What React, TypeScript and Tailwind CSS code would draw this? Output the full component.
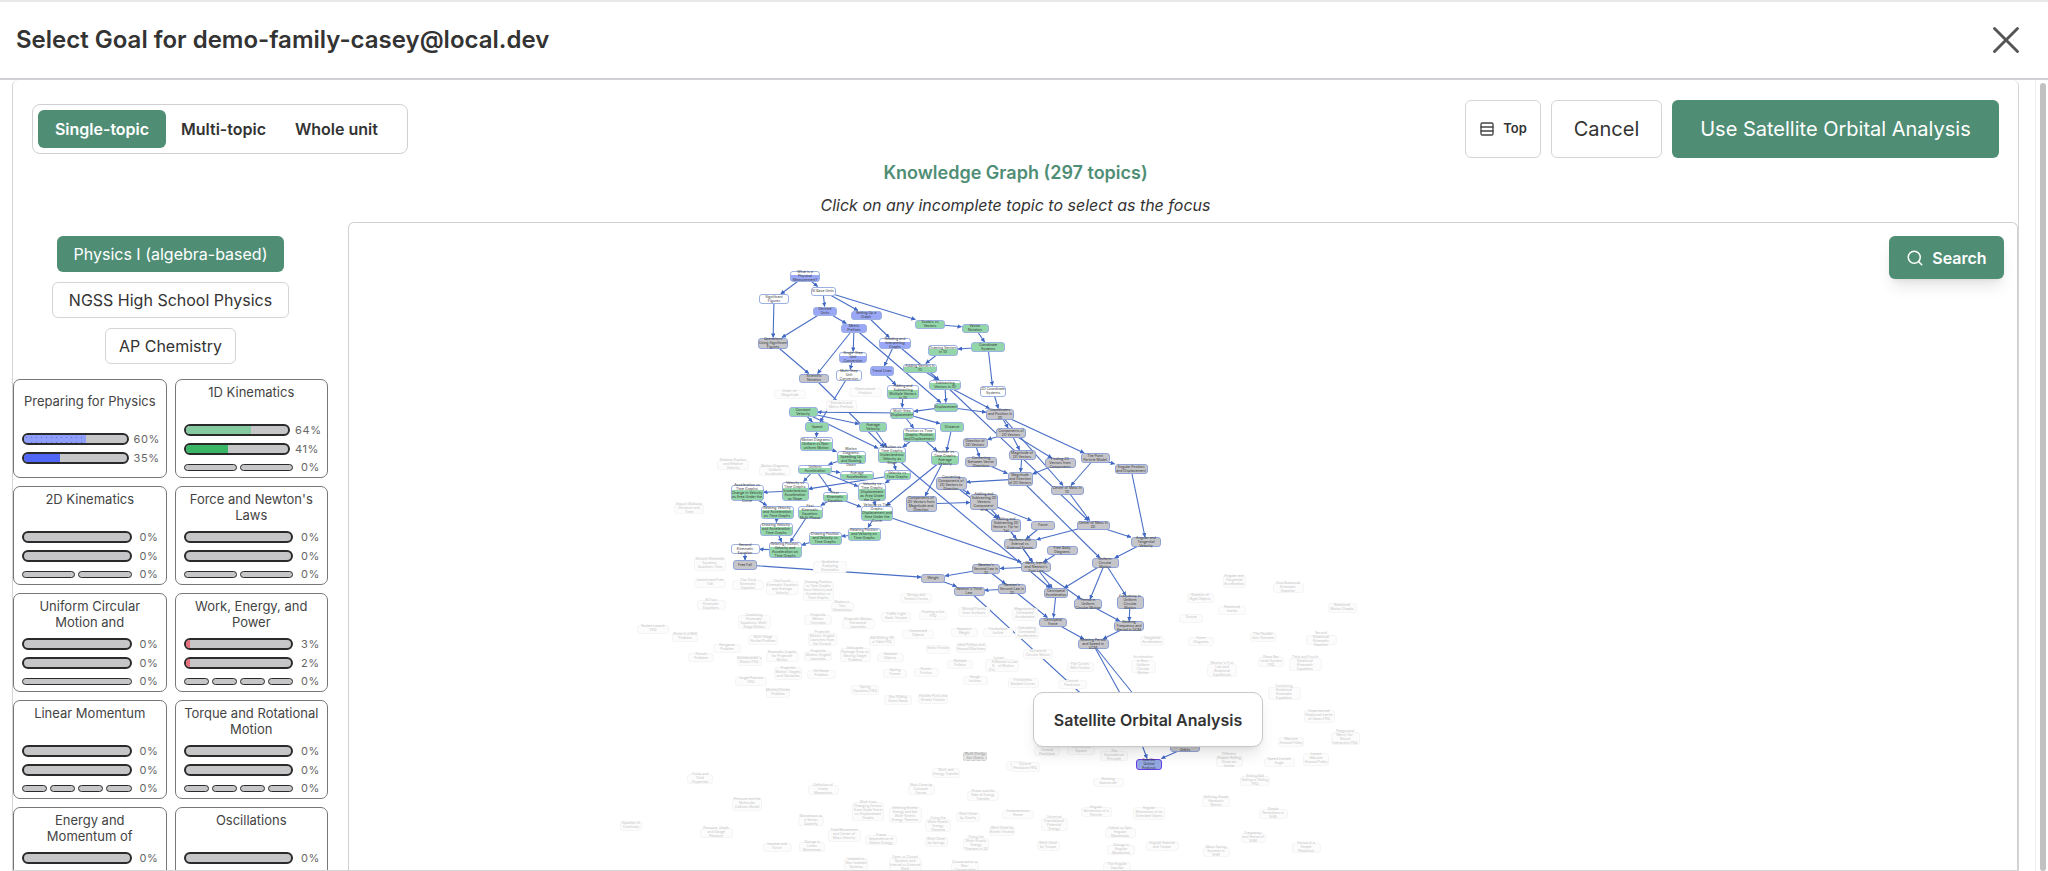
import React from 'react';
import { X, Rows3, Search } from 'lucide-react';

type Kind = 'b' | 'bh' | 'g' | 'gh' | 'w' | 's' | 'sel';
type GraphNode = [string, number, number, number, number, string, Kind];

// page coordinates of the lit part of the graph: id, centre x, centre y, w, h, label, kind
const nodes: GraphNode[] = [
  ['what', 804, 276, 30, 11, 'What is a Physical Measurement?', 'bh'],
  ['si', 822, 291, 25, 9, 'SI Base Units', 'w'],
  ['sig', 773, 299, 30, 10, 'Significant Figures', 'w'],
  ['derived', 824, 311, 24, 9, 'Derived Units', 'b'],
  ['setup', 865, 315, 31, 9, 'Setting Up a Graph', 'b'],
  ['scalars', 929, 324, 30, 9, 'Scalars vs Vectors', 'g'],
  ['vecnot', 974, 328, 27, 9, 'Vector Notation', 'g'],
  ['metric', 853, 328, 26, 9, 'Metric Prefixes', 'b'],
  ['ops', 772, 343, 30, 11, 'Operations Using Significant Figures', 's'],
  ['reading', 894, 343, 32, 11, 'Reading and Interpreting Graphs', 'bh'],
  ['coord', 987, 347, 34, 10, 'Coordinate Systems', 'g'],
  ['draw1d', 942, 350, 30, 11, 'Drawing Vectors in 1D', 'gh'],
  ['single', 852, 357, 28, 11, 'Single-Step Unit Conversion', 'bh'],
  ['add1d', 919, 368, 34, 9, 'Adding Vectors in 1D', 'gh'],
  ['trend', 881, 371, 24, 10, 'Trend Lines', 'b'],
  ['multi', 848, 375, 26, 11, 'Multi-Step Unit Conversion', 'w'],
  ['sci', 813, 378, 30, 9, 'Scientific Notation', 's'],
  ['sub1d', 944, 385, 32, 10, 'Subtracting Vectors in 1D', 'gh'],
  ['addm', 902, 392, 32, 14, 'Adding and Subtracting Multiple Vectors in 1D', 'gh'],
  ['sys2d', 992, 391, 26, 11, '2D Coordinate Systems', 'w'],
  ['disp', 945, 407, 24, 9, 'Displacement', 'g'],
  ['constv', 802, 412, 29, 10, 'Constant Velocity', 'g'],
  ['mdisp', 901, 413, 24, 11, 'Multi-Step Displacement', 'gh'],
  ['pos2d', 999, 414, 28, 11, 'Coordinates and Position in 2D', 's'],
  ['speed', 816, 427, 24, 10, 'Speed', 'g'],
  ['avgv', 872, 427, 28, 10, 'Average Velocity', 'g'],
  ['dist', 951, 427, 24, 10, 'Distance', 'g'],
  ['ptg', 918, 435, 33, 14, 'Position vs Time Graphs: Position and Displacement', 'gh'],
  ['md1', 815, 444, 33, 14, 'Motion Diagrams: Uniform vs Non-uniform Motion', 'gh'],
  ['md2', 850, 457, 29, 13, 'Motion Diagrams: Speeding Up and Slowing Down', 'gh'],
  ['ptv', 891, 455, 28, 16, 'Position vs Time Graphs: Instantaneous Velocity as Slope', 'gh'],
  ['pta', 944, 458, 28, 14, 'Position vs Time Graphs: Average Velocity', 'gh'],
  ['unia', 814, 469, 34, 9, 'Uniform Acceleration', 'gh'],
  ['avga', 856, 475, 34, 9, 'Average Acceleration', 'gh'],
  ['vtg', 896, 475, 27, 10, 'Velocity vs Time Graphs', 'gh'],
  ['vta', 794, 491, 27, 19, 'Velocity vs Time Graphs: Instantaneous Acceleration as Slope', 'gh'],
  ['vtd', 871, 492, 28, 18, 'Velocity vs Time Graphs: Displacement as Area Under the Curve', 'gh'],
  ['atg', 746, 493, 33, 16, 'Acceleration vs Time Graphs: Change in Velocity as Area Under the Curve', 'gh'],
  ['k1', 834, 497, 25, 10, 'First Kinematic Equation', 'gh'],
  ['rva', 776, 512, 33, 13, 'Relating Velocity and Acceleration on Time Graphs', 'gh'],
  ['k1m', 809, 512, 25, 13, 'First Kinematic Equation: Multi-Phase', 'gh'],
  ['vtarea', 876, 513, 32, 15, 'Velocity vs Time Graphs: Displacement and Area Under the Curve', 'gh'],
  ['dva', 775, 529, 33, 13, 'Drawing Velocity and Acceleration Time Graphs', 'gh'],
  ['rpv', 863, 534, 33, 13, 'Relating Position and Velocity on Time Graphs', 'gh'],
  ['dpv', 824, 538, 33, 13, 'Drawing Position and Velocity vs Time Graphs', 'gh'],
  ['rpva', 784, 550, 33, 16, 'Relating Position, Velocity and Acceleration on Time Graphs', 'gh'],
  ['k2', 744, 549, 29, 10, 'Second Kinematic Equation', 'w'],
  ['fall', 744, 565, 24, 10, 'Free Fall', 's'],
  ['weight', 932, 578, 24, 9, 'Weight', 's'],
  ['cm2d', 920, 504, 31, 16, 'Components of 2D Vectors from Magnitude and Direction', 's'],
  ['conv', 950, 483, 31, 13, 'Converting Components of 2D Vectors to Direction', 's'],
  ['comp', 1010, 433, 30, 10, 'Components of 2D Vectors', 's'],
  ['dir', 974, 443, 25, 10, 'Direction of 2D Vectors', 's'],
  ['convd', 980, 462, 32, 10, 'Converting Between Vector Directions', 's'],
  ['mag', 1021, 455, 27, 10, 'Magnitude of 2D Vectors', 's'],
  ['find', 1059, 463, 31, 10, 'Finding 2D Vectors from Components', 's'],
  ['point', 1094, 458, 29, 10, 'The Point Particle Model', 's'],
  ['angpos', 1130, 469, 33, 10, 'Angular Position and Displacement', 's'],
  ['magdir', 1019, 479, 25, 14, 'Magnitude and Direction of 2D Vectors', 's'],
  ['cm1d', 1066, 490, 33, 9, 'Center of Mass in 1D', 's'],
  ['addc', 983, 502, 28, 16, 'Adding and Subtracting 2D Vectors: Component-wise', 's'],
  ['addt', 1005, 525, 30, 13, 'Adding and Subtracting 2D Vectors: Tip-to-Tail', 's'],
  ['force', 1042, 525, 24, 9, 'Force', 's'],
  ['cmm', 1092, 525, 33, 9, 'Center of Mass in 2D', 's'],
  ['angv', 1145, 542, 30, 10, 'Angular and Tangential Velocity', 's'],
  ['systems', 1019, 544, 33, 10, 'Systems and Internal vs External Forces', 's'],
  ['fbd', 1061, 550, 31, 9, 'Free Body Diagrams', 's'],
  ['ucm', 1104, 563, 27, 10, 'Uniform Circular Motion', 's'],
  ['n1', 1035, 567, 30, 10, "Mass, Inertia and Newton's First Law", 's'],
  ['n2', 985, 569, 28, 10, "Newton's Second Law in 1D", 's'],
  ['n22', 1011, 589, 28, 10, "Newton's Second Law in 2D", 's'],
  ['n3', 968, 591, 31, 9, "Newton's Third Law", 's'],
  ['cacc', 1055, 593, 24, 10, 'Centripetal Acceleration', 's'],
  ['period', 1087, 604, 28, 10, 'Period in Uniform Circular Motion', 's'],
  ['freq', 1129, 602, 27, 13, 'Frequency in Uniform Circular Motion', 's'],
  ['rfp', 1128, 626, 30, 10, 'Relating Frequency and Period in UCM', 's'],
  ['cf', 1052, 622, 28, 9, 'Centripetal Force', 's'],
  ['rps', 1092, 644, 31, 10, 'Relating Period and Speed in UCM', 's'],
  ['grav', 1100, 712, 20, 8, 'Gravitation', 's'],
  ['h1', 1125, 704, 14, 8, 'Circular Orbits', 's'],
  ['h2', 1142, 706, 14, 8, 'Orbital Speed', 's'],
  ['h3', 1140, 742, 16, 8, 'Orbital Period', 's'],
  ['kep', 1184, 748, 30, 7, "Kepler's Laws of Orbits", 's'],
  ['sat', 1148, 764, 26, 11, 'Satellite Orbital Analysis', 'sel'],
];

const edges = [
  'what>sig', 'what>si', 'si>derived', 'si>setup', 'si>scalars', 'derived>ops', 'derived>metric', 'setup>reading',
  'scalars>vecnot', 'vecnot>coord', 'coord>draw1d', 'coord>sys2d', 'sig>ops', 'ops>sci', 'metric>single', 'metric>sci',
  'metric>disp', 'reading>trend', 'reading>sub1d', 'draw1d>add1d', 'add1d>sub1d', 'single>multi', 'multi>speed',
  'trend>addm', 'sub1d>disp', 'sub1d>pos2d', 'sys2d>pos2d', 'addm>mdisp', 'disp>mdisp', 'disp>pos2d', 'mdisp>constv',
  'mdisp>ptg', 'mdisp>dist', 'constv>speed', 'constv>avgv', 'constv>ptv', 'sci>ptv', 'avgv>ptv', 'ptg>ptv', 'ptg>pta',
  'dist>pta', 'speed>md1', 'md1>md2', 'md2>unia', 'unia>avga', 'unia>vta', 'unia>k1', 'unia>vtd', 'ptv>vtg', 'vtg>vta',
  'vtg>vtd', 'vta>atg', 'atg>rva', 'k1>k1m', 'k1>vtarea', 'pta>vtarea', 'vtd>vtarea', 'rva>dva', 'dva>rpva', 'k1m>rpva',
  'vtarea>rpv', 'rpv>dpv', 'dpv>rpva', 'rpva>k2', 'k2>fall', 'fall>weight', 'n2>weight', 'weight>n3', 'n22>n3', 'n2>n22',
  'pos2d>comp', 'pos2d>point', 'pos2d>cm1d', 'comp>dir', 'comp>mag', 'comp>find', 'dir>convd', 'convd>magdir', 'mag>magdir',
  'find>magdir', 'point>angpos', 'point>cm1d', 'magdir>conv', 'magdir>ucm', 'cm1d>cmm', 'conv>addc', 'cm2d>addc', 'conv>addt',
  'addc>addt', 'addc>force', 'addt>systems', 'force>systems', 'cmm>systems', 'cmm>angv', 'angpos>angv', 'angv>ucm', 'sub1d>cmm',
  'systems>n1', 'fbd>n1', 'addt>n1', 'n1>n2', 'n1>cacc', 'n1>period', 'ucm>cacc', 'ucm>period', 'ucm>freq', 'period>rfp',
  'freq>rfp', 'rfp>rps', 'cacc>cf', 'n22>cf', 'cf>rps', 'n3>grav', 'rps>h1', 'rps>h2', 'h3>sat', 'kep>sat', 'ptv>cacc', 'pta>cm2d',
  'vtarea>n1',
];

// dimmed topics: centre x, centre y, w, h, label
const faded: [number, number, number, number, string][] = [
  [789, 394, 32, 9, 'Order-of-Magnitude'], [864, 392, 33, 9, 'Dimensional Analysis'], [840, 406, 31, 12, 'Standard and Metric Prefixes'],
  [732, 465, 32, 10, 'Relative Position and Relative Velocity'], [774, 471, 32, 10, 'Motion Diagrams: Uniform Acceleration'],
  [688, 509, 30, 10, 'Airport Walkway Distance and Time'], [709, 564, 32, 14, 'Second Kinematic Equation, Quadratic Time'],
  [709, 583, 32, 9, 'Launch and Free Fall'], [747, 585, 32, 10, 'The Third Kinematic Equation'],
  [781, 588, 33, 14, 'The Fourth Kinematic Equation and Average Velocity'],
  [817, 591, 31, 19, 'Drawing Position vs Time Graphs from Velocity and Acceleration vs Time Graphs'],
  [829, 567, 34, 12, 'Qualitative Analyzing Kinematics'], [710, 605, 29, 10, 'All Four Kinematic Equations'],
  [841, 607, 23, 10, 'Motion in Two Dimensions'], [753, 622, 33, 14, 'Combining Kinematic Equations: Multi-Stage Motion'],
  [817, 620, 28, 10, 'Projectile Motion Concepts'], [857, 624, 33, 10, 'Projectile Motion: Horizontal Launches'],
  [915, 598, 32, 10, 'Strings and Tension Forces'], [895, 617, 30, 10, 'Traffic Light Static Tension'], [932, 615, 28, 9, 'Pushing a Car FRQ'],
  [973, 612, 32, 10, 'Normal Forces from Surfaces'], [917, 634, 32, 9, 'Connected Objects'], [963, 632, 27, 9, 'Apparent Weight'],
  [997, 632, 30, 9, 'Frictionless Incline'], [652, 629, 32, 9, 'Rocket Launch FRQ'], [684, 637, 26, 10, 'Stone in a Well Problem'],
  [762, 640, 30, 10, 'Multi-Stage Rocket Problem'], [821, 639, 29, 13, 'Projectile Motion: Angled Launches from the Ground'],
  [881, 641, 26, 10, 'Ball Rolling Off a Table FRQ'], [937, 649, 24, 9, 'Static Friction'], [970, 648, 31, 10, 'Ideal Pulleys and Atwood Machines'],
  [726, 648, 28, 9, 'Kangaroo Problem'], [700, 657, 26, 9, 'Pursuit Problem'], [748, 661, 25, 10, "Skateboarder's Motion FRQ"],
  [781, 657, 33, 10, 'Kinematic Graphs for Projectile Motion'], [817, 656, 28, 10, 'Projectile Motion: Angled Launches'],
  [854, 655, 31, 14, 'Helicopter Package Drop on Moving Target Problem'], [889, 657, 27, 9, 'Stacked Objects'], [959, 664, 26, 9, 'Multiple Pulleys'],
  [998, 665, 28, 13, "Instant Atwood's Machine (Frictionless)"], [787, 673, 28, 13, 'Projectile Motion: Targets and Obstacles'],
  [820, 674, 29, 9, 'Ski Ramp Problem'], [894, 673, 24, 9, 'Spring Forces'], [925, 672, 25, 9, 'Kinetic Friction'], [974, 680, 25, 9, 'Rough Inclines'],
  [750, 681, 32, 9, 'Target Practice FRQ'], [777, 693, 24, 10, 'Monkey/Hunter Problem'], [864, 690, 28, 10, 'Spring Dynamics FRQ'],
  [897, 700, 28, 10, 'Box Sliding Down Ramp'], [932, 699, 30, 10, 'Hockey Puck and Kinetic Friction'], [945, 773, 28, 10, 'Work and Energy Transfer'],
  [699, 779, 26, 10, 'Fluids and Fluid Properties'], [822, 790, 31, 10, 'Definition of Linear Momentum'], [920, 790, 27, 10, 'Work Done by Constant Forces'],
  [982, 796, 32, 10, 'Power and the Rate of Energy Transfer'], [746, 804, 30, 13, 'Pressure and the Molecular Collision Model'],
  [867, 811, 32, 19, 'Work from Changing Forces: Area Under Force vs Displacement Graphs'], [904, 815, 33, 16, 'Defining Kinetic Energy and the Work-Kinetic Energy Theorem'],
  [937, 825, 26, 13, 'Using the Work-Kinetic Energy Theorem'], [810, 821, 26, 10, 'Momentum as a Vector Quantity'], [967, 817, 24, 10, 'Work Done by Gravity'],
  [630, 826, 22, 10, 'Equation of Continuity'], [715, 833, 33, 10, 'Pressure, Depth and Gauge Pressure'],
  [843, 835, 33, 13, 'Total Momentum and Center of Mass Velocity'], [1001, 831, 26, 10, 'Work Done by Kinetic Friction'], [880, 840, 32, 10, 'Frame Dependence of Kinetic Energy'],
  [935, 842, 23, 10, 'Work Done by Springs'], [975, 844, 26, 13, 'Using the Work-Kinetic Energy Theorem in 2D'], [776, 847, 29, 9, 'Impulse and Force'],
  [811, 847, 26, 10, 'Change in Linear Momentum'], [855, 864, 24, 13, 'Isolated vs Non-Isolated Systems'], [904, 864, 33, 13, 'Open vs Closed Systems and Internal vs External Work'],
  [964, 867, 28, 10, 'Conservative vs Non-Conservative'], [1017, 814, 32, 9, 'Instantaneous Power'], [1015, 766, 20, 10, 'Curved'],
  [1024, 614, 26, 13, 'Magnitude of Centripetal Acceleration'], [1026, 633, 24, 12, 'Calculating Centripetal Acceleration'], [1037, 654, 30, 10, 'Horizontal Circular Motion'],
  [1079, 667, 27, 10, 'Flat Curves With Friction'], [1022, 683, 31, 10, 'Frictionless Banked Curves'], [1071, 684, 29, 9, 'Conical Pendulum'],
  [1005, 665, 25, 13, "Newton's Law of Motion"], [1151, 641, 24, 10, 'Tangential Acceleration'], [1200, 641, 26, 9, 'Force Diagrams'],
  [1142, 666, 25, 13, 'Acceleration in Non-Uniform Circular Motion'], [1221, 670, 30, 13, "Newton's First Law and Rotational Equilibrium"],
  [1270, 662, 26, 10, 'Plane Rev Level System FRQ'], [1304, 664, 33, 13, 'Third and Fourth Rotational Kinematic Equations'], [1262, 637, 26, 10, 'The Parallel Axis Theorem'],
  [1320, 640, 31, 10, 'Second Rotational Kinematic Equation'], [1283, 693, 33, 13, 'Combining Rotational Kinematic Equations'],
  [1318, 716, 31, 13, 'Experimental Rotational Inertia of Gears FRQ'], [1290, 742, 26, 10, 'Massive Atwood Pulley'], [1315, 759, 26, 13, 'Instant Massive Atwood Pulley'],
  [1278, 762, 31, 9, 'Speed Limited Angle'], [1228, 761, 27, 11, 'Different Shapes Rolling Down an Incline'], [1254, 781, 30, 10, 'Rolling Ball Rolling or Sliding FRQ'],
  [1107, 782, 31, 9, 'Rotating Spacecraft'], [1046, 751, 26, 10, 'Period of Conical Pendulum'], [1080, 750, 28, 9, 'The Inverse Square'], [1113, 756, 28, 10, 'The Equivalence Principle'],
  [1024, 767, 29, 10, 'Conical Pendulum FRQ'], [1215, 802, 28, 10, 'Defining Simple Harmonic Motion'], [1272, 814, 29, 10, 'Simple Pendulums in SHM'],
  [1095, 812, 31, 10, 'Angular Momentum of a Particle'], [1148, 813, 32, 13, 'Angular Momentum of an Extended Object'], [1053, 824, 27, 13, 'Universal Gravitational Potential Energy'],
  [1119, 833, 31, 10, 'Orbital vs Spin Angular Momentum'], [1252, 838, 25, 10, 'Frequency and Period of SHM'], [1305, 848, 29, 10, 'Period of a Simple Pendulum'],
  [1161, 846, 33, 10, 'Angular Impulse and Torque'], [1215, 852, 27, 10, 'Mass-Spring Systems in SHM'], [1120, 850, 28, 10, 'Change in Angular Momentum'],
  [1047, 846, 23, 10, 'Work Done by Torque'], [1116, 867, 28, 10, 'The Angular Impulse'], [1233, 581, 23, 13, 'Angular and Tangential Acceleration'],
  [1287, 588, 31, 10, 'First Rotational Kinematic Equation'], [1341, 608, 29, 10, 'Rotational Motion Graphs'], [1199, 598, 27, 10, 'Rotation of Rigid Objects'],
  [1231, 610, 28, 9, 'Rotational Inertia'], [1190, 618, 24, 9, 'Torque'], [1344, 738, 29, 13, 'Playground Merry-Go-Round Interaction FRQ'],
];

const kindClass: Record<Kind, string> = {
  b: 'bg-[#9aa8f7] border-[#9db0e2]',
  bh: 'bg-[linear-gradient(to_bottom,#ffffff_35%,#9aa8f7_35%)] border-[#9db0e2]',
  g: 'bg-[#92d6a9] border-[#9db0e2]',
  gh: 'bg-[linear-gradient(to_bottom,#ffffff_30%,#92d6a9_30%)] border-[#9db0e2]',
  w: 'bg-white border-[#9db0e2]',
  s: 'bg-[#c6c6ca] border-[#8fa3d6]',
  sel: 'bg-[#94a8e2] border-[#6a3de8]',
};

// panel inner corner on the page
const OX = 348;
const OY = 223;

const byId = new Map(nodes.map((n) => [n[0], n]));

// where the line from a to b leaves the box of b
const clip = (ax: number, ay: number, n: GraphNode) => {
  const dx = ax - n[1];
  const dy = ay - n[2];
  const s = Math.min(n[3] / 2 / Math.max(Math.abs(dx), 0.01), n[4] / 2 / Math.max(Math.abs(dy), 0.01));
  return [n[1] + dx * s, n[2] + dy * s];
};

const GraphEdges = () => (
  <svg className="absolute left-0 top-0 w-[1700px] h-[660px]">
    <defs>
      <marker id="arrow" viewBox="0 0 6 6" refX="5.5" refY="3" markerWidth="4" markerHeight="4" orient="auto">
        <path d="M0 0L6 3L0 6z" fill="#3f66c4" />
      </marker>
    </defs>
    {edges.map((e) => {
      const [from, to] = e.split('>');
      const a = byId.get(from)!;
      const b = byId.get(to)!;
      const [x, y] = clip(a[1], a[2], b);
      return (
        <line
          key={e}
          x1={a[1] - OX}
          y1={a[2] - OY}
          x2={x - OX}
          y2={y - OY}
          stroke="#4a6fc6"
          strokeWidth="1.1"
          markerEnd="url(#arrow)"
        />
      );
    })}
  </svg>
);

const GraphNodes = () => (
  <>
    {faded.map(([x, y, w, h, label]) => (
      <div
        key={label}
        className="absolute flex items-center justify-center rounded-[3px] border border-[#f5f5f5] bg-[#fcfcfc] text-center text-[3.4px] leading-[1.15] text-[#c4c4c4]"
        style={{ left: x - w / 2 - OX, top: y - h / 2 - OY, width: w, height: h }}
      >
        {label}
      </div>
    ))}
    <div
      className="absolute flex h-[9px] w-[24px] items-center justify-center rounded-[2px] border border-dashed border-[#cccccc] bg-[#e6e6e6] text-center text-[3.4px] leading-[1.1] text-[#999999]"
      style={{ left: 962 - OX, top: 752 - OY }}
    >
      Work-Energy Bar Charts
    </div>
    {nodes.map(([id, x, y, w, h, label, kind]) => (
      <div
        key={id}
        className={`absolute flex items-center justify-center rounded-[3px] border-[1.5px] text-center text-[3.5px] leading-[1.15] text-[#333333] ${kindClass[kind]}`}
        style={{ left: x - w / 2 - OX, top: y - h / 2 - OY, width: w, height: h }}
      >
        {label}
      </div>
    ))}
  </>
);

type Bar = { pct: number; fill?: string };
type Unit = { title: string; bars: Bar[]; segs?: number };

const none: Bar[] = [{ pct: 0 }, { pct: 0 }];

const units: Unit[] = [
  {
    title: 'Preparing for Physics',
    bars: [
      { pct: 60, fill: 'bg-[#8f9ef8] bg-[radial-gradient(#5c6fe0_0.6px,transparent_0.9px)] bg-[length:5px_5px]' },
      { pct: 35, fill: 'bg-[#4f66f6]' },
    ],
  },
  { title: '1D Kinematics', bars: [{ pct: 64, fill: 'bg-[#84c9a0]' }, { pct: 41, fill: 'bg-[#3ab566]' }], segs: 2 },
  { title: '2D Kinematics', bars: none, segs: 2 },
  { title: "Force and Newton's Laws", bars: none, segs: 2 },
  { title: 'Uniform Circular Motion and Gravitation', bars: none, segs: 1 },
  { title: 'Work, Energy, and Power', bars: [{ pct: 3, fill: 'bg-[#e8707c]' }, { pct: 2, fill: 'bg-[#e8707c]' }], segs: 4 },
  { title: 'Linear Momentum', bars: none, segs: 4 },
  { title: 'Torque and Rotational Motion', bars: none, segs: 4 },
  { title: 'Energy and Momentum of Rotating Systems', bars: none, segs: 4 },
  { title: 'Oscillations', bars: none, segs: 4 },
];

const Pct = ({ pct }: { pct: number }) => (
  <span
    className={`shrink-0 text-[11px] leading-none tracking-[0.6px] text-[#666666] ${
      pct >= 10 ? 'w-[29px] pl-[5px]' : 'w-[26px] pl-2'
    }`}
  >
    {pct}%
  </span>
);

const UnitCard = ({ unit }: { unit: Unit }) => (
  <div className="flex h-[99px] flex-col justify-center rounded-[7px] border border-[#777777] px-2">
    <div className="h-8 overflow-hidden text-center text-[13px] leading-4 text-[#444444]">{unit.title}</div>
    <div className="mt-2 flex flex-col gap-[7px]">
      {unit.bars.map((bar, i) => (
        <div key={i} className="flex items-center">
          <div className="h-3 min-w-0 flex-1 overflow-hidden rounded-full border-2 border-[#2a2a2a] bg-[#c6c6c9]">
            {bar.pct > 0 && <div className={`h-full ${bar.fill}`} style={{ width: `${Math.max(bar.pct, 4)}%` }} />}
          </div>
          <Pct pct={bar.pct} />
        </div>
      ))}
      {unit.segs && (
        <div className="flex items-center">
          <div className="flex min-w-0 flex-1 gap-[3px]">
            {Array.from({ length: unit.segs }).map((_, i) => (
              <div key={i} className="h-[7px] flex-1 rounded-full border-[1.5px] border-[#2a2a2a] bg-[#c6c6c9]" />
            ))}
          </div>
          <Pct pct={0} />
        </div>
      )}
    </div>
  </div>
);

const App: React.FC = () => {
  return (
    <div className="flex h-[871px] w-[2048px] flex-col overflow-hidden border-t-2 border-[#e8e8e8] bg-white font-['Inter',sans-serif]">
      <header className="flex h-[78px] shrink-0 items-center justify-between border-b-2 border-[#cfd0d3] pl-4 pr-[19px]">
        <h1 className="text-[24px] font-semibold text-[#333333]">Select Goal for demo-family-casey@local.dev</h1>
        <X className="h-[46px] w-[46px] text-[#555555]" strokeWidth={1.5} />
      </header>

      <div className="flex min-h-0 flex-1">
        <main className="ml-3 flex min-h-0 w-[2007px] flex-col rounded-t-md border border-t-0 border-[#d5d5d5] pt-5">
          <div className="flex h-[58px] shrink-0 items-start justify-between pl-[19px] pr-[19px]">
            <div className="mt-1 flex h-[50px] w-[376px] items-center rounded-lg border-[1.5px] border-[#d0d0d0] pl-[5px]">
              <button className="h-[38px] w-[128px] rounded-md bg-[#4f8e75] text-[16px] font-semibold text-white">Single-topic</button>
              <button className="ml-[15px] text-[16px] font-semibold text-[#333333]">Multi-topic</button>
              <button className="ml-[29px] text-[16px] font-semibold text-[#333333]">Whole unit</button>
            </div>
            <div className="flex gap-[10px]">
              <button className="flex h-[58px] w-[76px] items-center justify-center gap-2 rounded-md border-[1.5px] border-[#d5d5d5] text-[13px] font-semibold text-[#333333]">
                <Rows3 className="h-4 w-4 text-[#444444]" />
                Top
              </button>
              <button className="h-[58px] w-[111px] rounded-md border-[1.5px] border-[#d5d5d5] text-[20px] text-[#333333]">Cancel</button>
              <button className="h-[58px] w-[327px] rounded-md bg-[#4f8e75] text-[20px] text-white">Use Satellite Orbital Analysis</button>
            </div>
          </div>

          <div className="mt-[1px] h-7 shrink-0 text-center text-[18px] font-semibold leading-7 text-[#4f8e75]">Knowledge Graph (297 topics)</div>
          <div className="mt-[6px] h-6 shrink-0 text-center text-[16px] italic leading-6 text-[#333333]">
            Click on any incomplete topic to select as the focus
          </div>

          <div className="mt-[5px] flex min-h-0 flex-1 gap-5">
            <aside className="w-[315px] shrink-0 overflow-hidden pt-[14px]">
              <div className="flex flex-col items-center gap-[10px]">
                <button className="h-9 w-[227px] rounded-md bg-[#4f8e75] text-[16px] text-white">Physics I (algebra-based)</button>
                <button className="h-9 w-[237px] rounded-md border-[1.5px] border-[#d5d5d5] text-[16px] text-[#333333]">NGSS High School Physics</button>
                <button className="h-9 w-[131px] rounded-md border-[1.5px] border-[#d5d5d5] text-[16px] text-[#333333]">AP Chemistry</button>
              </div>
              <div className="mt-[15px] grid grid-cols-2 gap-2">
                {units.map((u) => (
                  <UnitCard key={u.title} unit={u} />
                ))}
              </div>
            </aside>

            <section className="relative min-w-0 flex-1 overflow-hidden rounded-t-md border border-b-0 border-[#d0d0d0]">
              <GraphEdges />
              <GraphNodes />
              <button className="absolute right-[13px] top-[13px] flex h-[43px] w-[115px] items-center justify-center gap-2 rounded-md bg-[#4f8e75] text-[16px] font-semibold text-white shadow-lg">
                <Search className="h-[18px] w-[18px]" />
                Search
              </button>
              <div
                className="absolute flex h-[55px] w-[230px] items-center justify-center rounded-[10px] border-[1.5px] border-[#c8c8c8] bg-white text-[16px] font-semibold text-[#333333] shadow-lg"
                style={{ left: 1032 - OX, top: 692 - OY }}
              >
                Satellite Orbital Analysis
              </div>
            </section>
          </div>
        </main>

        <div className="ml-auto flex w-[13px] shrink-0 justify-end border-l border-[#eeeeee] pr-[2px] pt-[3px]">
          <div className="h-full w-[6px] rounded-full bg-[#c1c1c1]" />
        </div>
      </div>
    </div>
  );
};

export default App;
